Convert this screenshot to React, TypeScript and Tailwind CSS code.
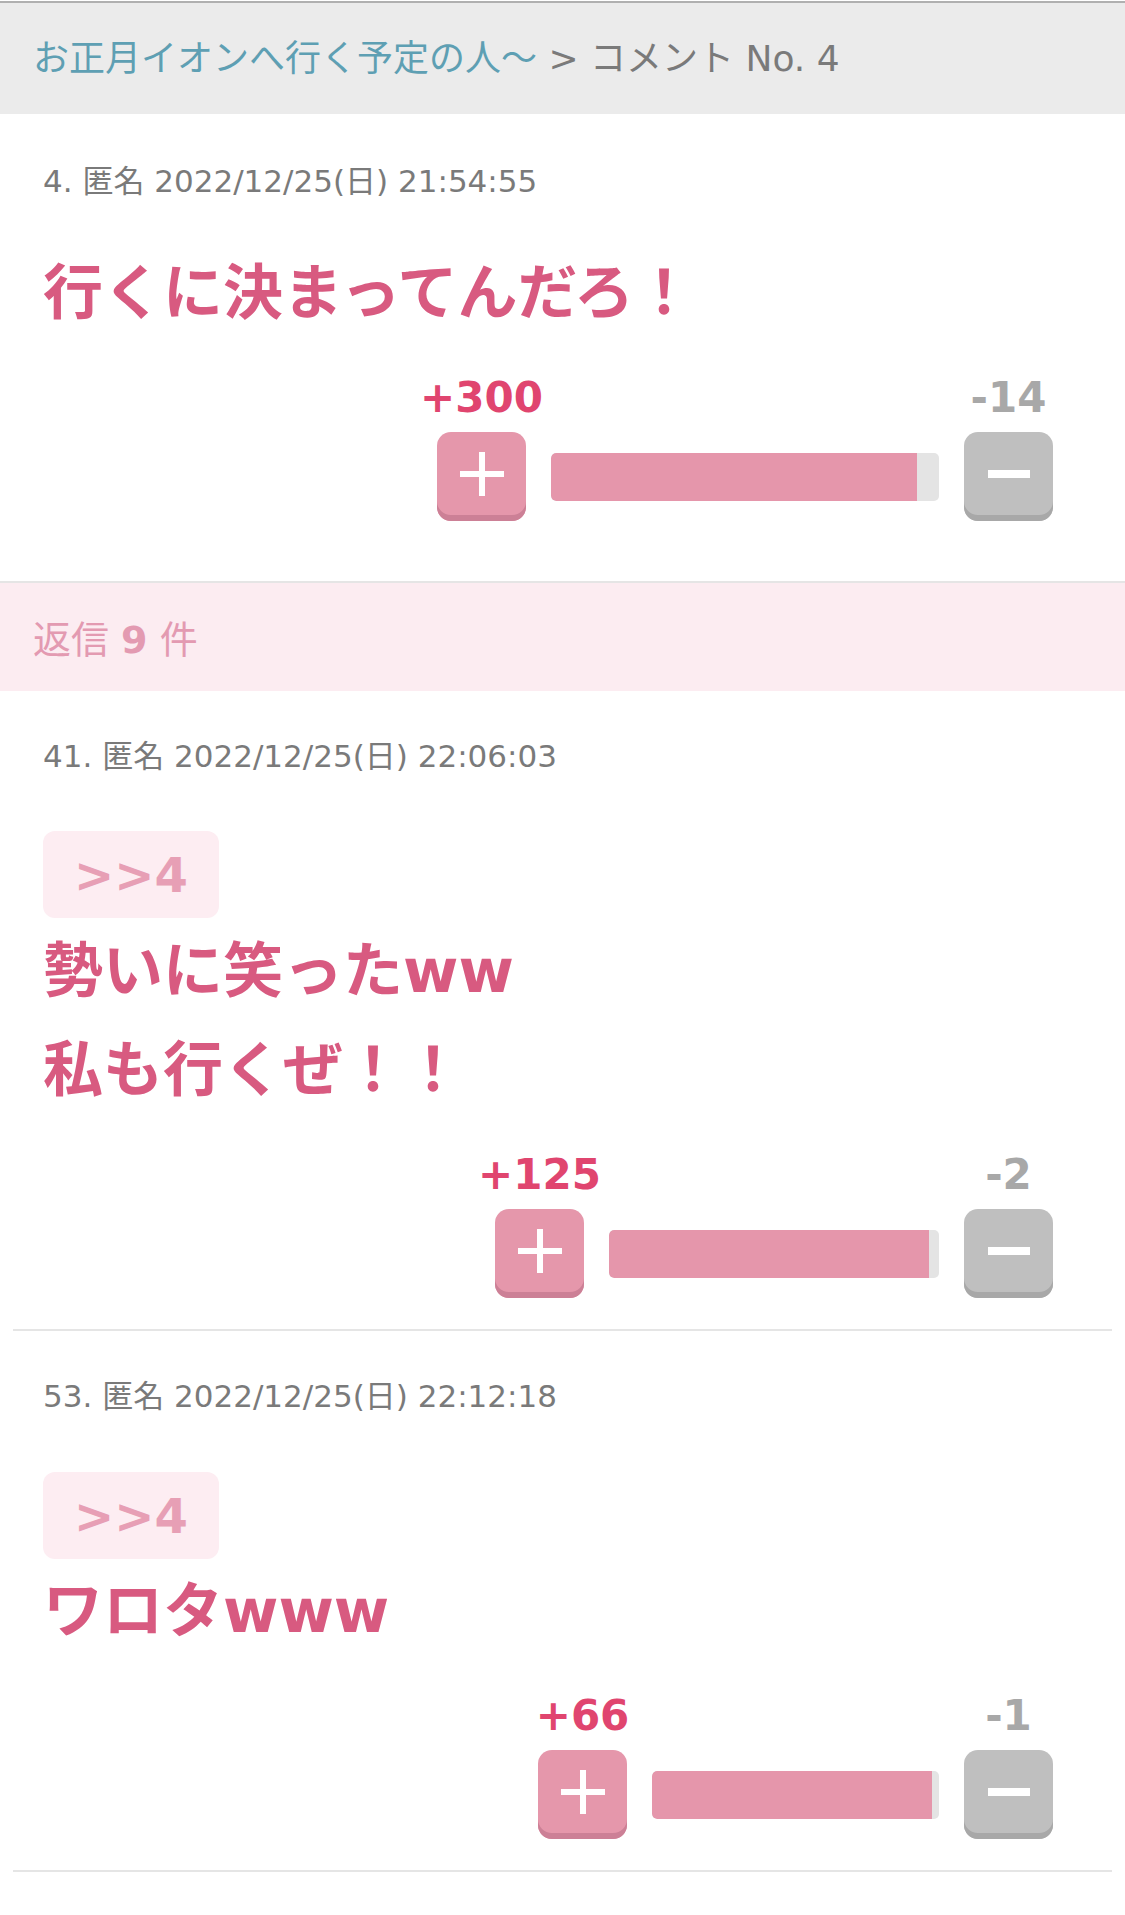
import React from "react";

const FONT = { fontFamily: "'DejaVu Sans', 'Noto Sans CJK JP', sans-serif" };

function PlusIcon() {
  return (
    <svg width="44" height="44" viewBox="0 0 44 44">
      <rect x="0" y="19" width="44" height="6" fill="#fff" />
      <rect x="19" y="0" width="6" height="44" fill="#fff" />
    </svg>
  );
}

function MinusIcon() {
  return (
    <svg width="44" height="10" viewBox="0 0 44 10">
      <rect x="1" y="1" width="42" height="8" fill="#fff" />
    </svg>
  );
}

function Vote({ up, down, barW, fill }: { up: string; down: string; barW: number; fill: number }) {
  return (
    <div className="flex justify-end items-end pr-[72px]">
      <div className="flex flex-col items-center w-[89px]">
        <div className="h-[44px] leading-[44px] text-[42px] font-bold text-[#e0456f] whitespace-nowrap">{up}</div>
        <div className="mt-[12px] w-[89px] h-[89px] rounded-[14px] bg-[#e597ab] shadow-[inset_0_-6px_0_#cc8096] flex items-center justify-center pb-[6px]">
          <PlusIcon />
        </div>
      </div>
      <div className="mx-[25px] mb-[20px] h-[48px] rounded-[5px] bg-[#e4e4e4] overflow-hidden" style={{ width: barW }}>
        <div className="h-full bg-[#e596ab] rounded-l-[5px]" style={{ width: `${fill}%` }} />
      </div>
      <div className="flex flex-col items-center w-[89px]">
        <div className="h-[44px] leading-[44px] text-[42px] font-bold text-[#a8a8a8] whitespace-nowrap">{down}</div>
        <div className="mt-[12px] w-[89px] h-[89px] rounded-[14px] bg-[#bfbfbf] shadow-[inset_0_-6px_0_#a8a8a8] flex items-center justify-center pb-[6px]">
          <MinusIcon />
        </div>
      </div>
    </div>
  );
}

function Meta({ children }: { children: React.ReactNode }) {
  return <div className="px-[43px] h-[40px] leading-[40px] text-[31px] text-[#7a7a7a] whitespace-nowrap">{children}</div>;
}

function Badge({ mt }: { mt: string }) {
  return (
    <div className={`mx-[43px] ${mt} w-[176px] h-[87px] rounded-[12px] bg-[#fdedf2] flex items-center justify-center text-[48px] font-bold text-[#e79fb5]`}>
      &gt;&gt;4
    </div>
  );
}

export default function App() {
  return (
    <div className="w-[1125px] min-h-[1915px] bg-white pt-[1px]" style={FONT}>
      <div className="border-t-2 border-[#b0b0b0] bg-[#ebebeb] h-[113px] flex items-center px-[33px] text-[36px] whitespace-nowrap">
        <span className="text-[#5e9fb3]">お正月イオンへ行く予定の人～</span>
        <span className="text-[#7a7a7a]">&nbsp;&gt;&nbsp;コメント No. 4</span>
      </div>

      <div className="pt-[47px] pb-[60px]">
        <Meta>4. 匿名 2022/12/25(日) 21:54:55</Meta>
        <div className="px-[43px] mt-[43px] text-[60px] leading-[99px] font-bold text-[#d85a80] whitespace-nowrap">行くに決まってんだろ！</div>
        <div className="mt-[33px]">
          <Vote up="+300" down="-14" barW={388} fill={94.3} />
        </div>
      </div>

      <div className="border-t-2 border-[#e5e5e5] bg-[#fcecf1] h-[110px] flex items-center pt-[6px] px-[33px] text-[38px] text-[#e39ab1]">
        <span>返信&nbsp;</span>
        <span className="font-bold">9</span>
        <span>&nbsp;件</span>
      </div>

      <div className="pt-[45px] pb-[31px]">
        <Meta>41. 匿名 2022/12/25(日) 22:06:03</Meta>
        <Badge mt="mt-[55px]" />
        <div className="px-[43px] mt-[4px] text-[60px] leading-[99px] font-bold text-[#d85a80] whitespace-nowrap">
          <div>勢いに笑ったww</div>
          <div>私も行くぜ！！</div>
        </div>
        <div className="mt-[33px]">
          <Vote up="+125" down="-2" barW={330} fill={97} />
        </div>
      </div>
      <div className="mx-[13px] h-[2px] bg-[#e5e5e5]" />

      <div className="pt-[45px] pb-[31px]">
        <Meta>53. 匿名 2022/12/25(日) 22:12:18</Meta>
        <Badge mt="mt-[56px]" />
        <div className="px-[43px] mt-[3px] text-[60px] leading-[99px] font-bold text-[#d85a80] whitespace-nowrap">
          <div>ワロタwww</div>
        </div>
        <div className="mt-[33px]">
          <Vote up="+66" down="-1" barW={287} fill={97.5} />
        </div>
      </div>
      <div className="mx-[13px] h-[2px] bg-[#e5e5e5]" />
    </div>
  );
}
